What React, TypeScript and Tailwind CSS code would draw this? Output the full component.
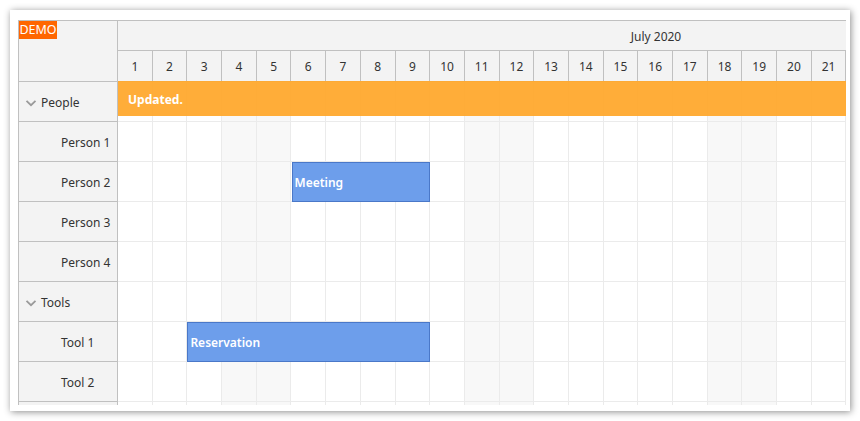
import React from "react";

const days = Array.from({ length: 31 }, (_, i) => i + 1);
const weekend = (d: number) => [4, 5, 11, 12, 18, 19, 25, 26].includes(d);

type Row = { name: string; group?: boolean; event?: { text: string; start: number; end: number } };
const rows: Row[] = [
  { name: "People", group: true },
  { name: "Person 1" },
  { name: "Person 2", event: { text: "Meeting", start: 6, end: 9 } },
  { name: "Person 3" },
  { name: "Person 4" },
  { name: "Tools", group: true },
  { name: "Tool 1", event: { text: "Reservation", start: 3, end: 9 } },
  { name: "Tool 2" },
  { name: "Tool 3" },
];

const CW = 34.7;

function Chevron() {
  return (
    <svg width="12" height="12" viewBox="0 0 12 12" className="shrink-0">
      <path d="M1.5 3.8 L6 8.2 L10.5 3.8" fill="none" stroke="#9a9a9a" strokeWidth="1.8" />
    </svg>
  );
}

export default function App() {
  return (
    <div className="w-[860px] h-[421px] bg-white pt-[10px] pl-[10px] font-['Noto_Sans',sans-serif] text-[12px] text-[#333] overflow-hidden">
      <div className="w-[840px] h-[401px] bg-white shadow-[1px_1px_7px_rgba(0,0,0,0.45)] pt-[10px] pl-[8px]">
        <div className="relative w-[828px] h-[385px] overflow-hidden border-l border-t border-[#c0c0c0] flex flex-col">
          <div className="flex h-[61px] shrink-0">
            <div className="relative w-[99px] shrink-0 border-r border-b border-[#c0c0c0] bg-[#f3f3f3]">
              <div className="absolute top-0 left-0 w-[38px] h-[18px] bg-[#ff6600] text-white text-[12.5px] flex items-center justify-center leading-none">
                DEMO
              </div>
            </div>
            <div className="flex-1 overflow-hidden bg-[#f3f3f3]">
              <div className="w-[1076px] flex flex-col">
                <div className="h-[30px] pt-[2px] border-b border-[#c0c0c0] flex items-center justify-center">July 2020</div>
                <div className="h-[31px] flex border-b border-[#c0c0c0]">
                  {days.map((d) => (
                    <div
                      key={d}
                      className="w-[34.7px] shrink-0 pt-[2px] border-r border-[#c0c0c0] flex items-center justify-center"
                    >
                      {d}
                    </div>
                  ))}
                </div>
              </div>
            </div>
          </div>
          {rows.map((r) => (
            <div key={r.name} className="flex h-[40px] shrink-0">
              <div className="w-[99px] shrink-0 pt-[2px] border-r border-b border-[#c0c0c0] bg-[#f3f3f3] flex items-center">
                {r.group ? (
                  <div className="flex items-center pl-[6px] gap-[4px]">
                    <Chevron />
                    <span>{r.name}</span>
                  </div>
                ) : (
                  <span className="pl-[42px]">{r.name}</span>
                )}
              </div>
              <div className="relative flex-1 overflow-hidden">
                <div className="flex w-[1076px] h-full">
                  {days.map((d) => (
                    <div
                      key={d}
                      className={`w-[34.7px] shrink-0 h-full border-r border-b border-[#ebebeb] ${
                        weekend(d) ? "bg-[#f8f8f8]" : "bg-white"
                      }`}
                    />
                  ))}
                </div>
                {r.event && (
                  <div
                    className="absolute top-0 h-[40px] pt-[2px] bg-[#6d9eeb] border border-[#4a78c8] text-white font-semibold flex items-center pl-[2px]"
                    style={{ left: (r.event.start - 1) * CW, width: (r.event.end - r.event.start + 1) * CW }}
                  >
                    {r.event.text}
                  </div>
                )}
              </div>
            </div>
          ))}
          <div className="absolute top-[60px] left-[99px] right-0 h-[35px] pt-[2px] bg-[#ffa92e]/95 text-white font-bold flex items-center pl-[10px]">
            Updated.
          </div>
        </div>
      </div>
    </div>
  );
}
